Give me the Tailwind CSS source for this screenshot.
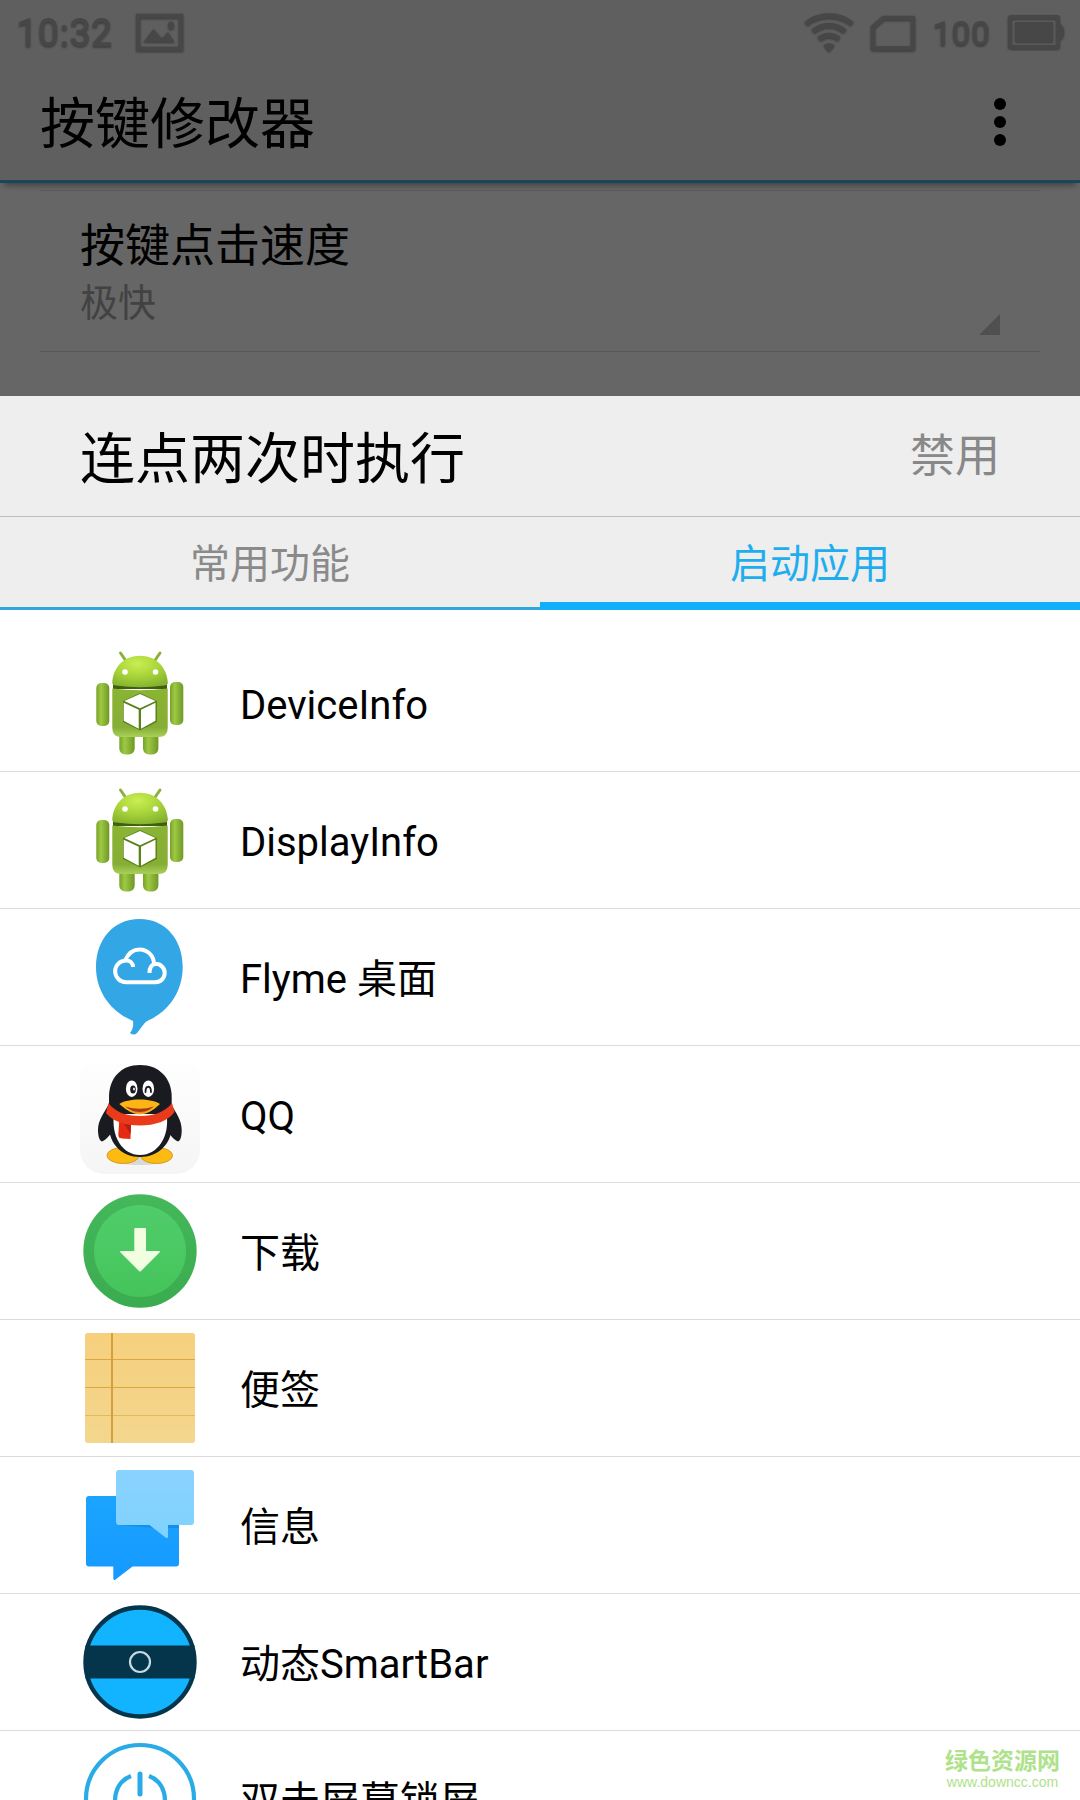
<!DOCTYPE html>
<html lang="zh-CN">
<head>
    <meta charset="UTF-8">
    <meta name="viewport" content="width=device-width, initial-scale=1.0">
    <title>按键修改器</title>
    <script src="https://cdn.jsdelivr.net/npm/@tailwindcss/browser@4"></script>
</head>
<body class="relative flex h-screen flex-col overflow-hidden bg-[#666666] font-['Roboto','Noto_Sans_CJK_SC',sans-serif] text-black">
    <!-- Status bar -->
    <div class="flex h-16 shrink-0 items-center justify-between bg-[#5f5f5f] px-4 pt-0.5 text-[#474747]">
        <div class="flex items-center gap-6 text-[38px] leading-10 font-medium text-shadow-[0_2px_2px_#00000055]">
            <span>10:32</span>
            <svg class="h-10 w-12 drop-shadow-[0_1px_1px_#00000066]" viewBox="0 0 48 40" fill="none">
                <rect x="2" y="3" width="43" height="33" stroke="currentColor" stroke-width="4.5"/>
                <path d="M7.500 29 17.500 16l8.500 9.500L32 19l6.500 10z" fill="currentColor"/>
                <ellipse cx="35" cy="12.500" rx="3" ry="4" fill="currentColor"/>
            </svg>
        </div>
        <div class="flex items-center text-[34px] leading-10 font-medium text-shadow-[0_2px_2px_#00000055]">
            <svg class="mr-4 h-11 w-[50px] drop-shadow-[0_1px_1px_#00000066]" viewBox="0 0 50 44" fill="none" stroke="currentColor" stroke-width="5">
                <path d="M2 13C14 2 36 2 48 13M9 20.500C18 12 32 12 41 20.500M15 28C21 23 29 23 35 28"/>
                <path d="M19.500 34.500C23 31.500 27 31.500 30.500 34.500L25 41z" fill="currentColor" stroke="none"/>
            </svg>
            <svg class="mr-4 h-10 w-[46px] drop-shadow-[0_1px_1px_#00000066]" viewBox="0 0 46 40" fill="none">
                <path d="M3 35.500V14L13.500 5H43v30.500z" stroke="currentColor" stroke-width="4.500" stroke-linejoin="round"/>
            </svg>
            <span class="mr-[18px]">100</span>
            <svg class="h-10 w-14 drop-shadow-[0_1px_1px_#00000066]" viewBox="0 0 56 40" fill="none">
                <rect x="2" y="4" width="48" height="30" rx="1" stroke="currentColor" stroke-width="4"/>
                <path d="M7 9h38v20H7zM52 11q4 2 4 8t-4 8z" fill="currentColor"/>
            </svg>
        </div>
    </div>

    <!-- Toolbar -->
    <header class="relative flex h-[119px] shrink-0 items-center justify-between border-b-3 border-[#18465c] bg-[#5f5f5f] pr-[68px] pl-10 shadow-[0_6px_6px_-4px_#00000066]">
        <h1 class="pt-1 text-[55px] leading-16">按键修改器</h1>
        <button type="button" aria-label="更多" class="p-1">
            <svg class="h-12 w-4" viewBox="0 0 16 48">
                <circle cx="8" cy="6" r="6"/>
                <circle cx="8" cy="24" r="6"/>
                <circle cx="8" cy="42" r="6"/>
            </svg>
        </button>
    </header>

    <!-- Preference behind the sheet -->
    <main class="shrink-0 px-10 pt-[7px] pb-11">
        <button type="button" class="flex w-full items-end justify-between border-y border-[#595959] px-10 pt-7 pb-4 text-left">
            <span class="pb-1.5">
                <span class="block text-[45px] leading-14">按键点击速度</span>
                <span class="block pt-0.5 text-[38px] leading-13 text-[#424242]">极快</span>
            </span>
            <svg class="h-[21px] w-[21px]" viewBox="0 0 21 21" fill="#505050"><path d="M21 0v21H0z"/></svg>
        </button>
    </main>

    <!-- Bottom sheet -->
    <section class="flex min-h-0 flex-1 flex-col bg-white">
        <div class="flex h-[121px] shrink-0 items-center justify-between border-b border-[#bdbdbd] bg-[#eeeeee] px-20">
            <h2 class="pt-1.5 text-[55px] leading-16">连点两次时执行</h2>
            <button type="button" class="pt-0.5 text-[45px] leading-16 text-[#888888]">禁用</button>
        </div>
        <div class="grid h-[93px] shrink-0 grid-cols-2 bg-[#eeeeee] text-[40px] leading-12" role="tablist">
            <button type="button" role="tab" aria-selected="false" class="border-b-3 border-[#2ea8dd] pt-1.5 text-[#8a8a8a]">常用功能</button>
            <button type="button" role="tab" aria-selected="true" class="border-b-8 border-[#12b0fc] pt-2.5 text-[#1fadee]">启动应用</button>
        </div>

        <ul class="min-h-0 flex-1 overflow-y-auto pt-[25px] text-[40px] leading-14 [scrollbar-width:none]">
            <li class="border-b border-[#dcdcdc]">
                <button type="button" class="flex w-full items-center gap-10 px-20 py-2 text-left">
                    <svg class="size-30" viewBox="0 0 120 120">
                        <defs>
                            <linearGradient id="limb" x1="0" x2="1" y1="0" y2="0">
                                <stop offset="0" stop-color="#78a226"/>
                                <stop offset=".35" stop-color="#9dc944"/>
                                <stop offset="1" stop-color="#6f9825"/>
                            </linearGradient>
                            <linearGradient id="torso" x1="0" x2="0" y1="0" y2="1">
                                <stop offset="0" stop-color="#8ab433"/>
                                <stop offset=".8" stop-color="#86ae36"/>
                                <stop offset="1" stop-color="#a9d058"/>
                            </linearGradient>
                            <radialGradient id="head" cx=".45" cy=".25" r=".8">
                                <stop offset="0" stop-color="#c9ee52"/>
                                <stop offset=".5" stop-color="#a8d53a"/>
                                <stop offset="1" stop-color="#83b02f"/>
                            </radialGradient>
                            <g id="android">
                                <path d="M40.500 10 46 18M80 10l-5.500 8" stroke="#8bb13c" stroke-width="3" stroke-linecap="round"/>
                                <rect x="39.300" y="86" width="15.400" height="25.500" rx="6" fill="url(#limb)"/>
                                <rect x="63" y="86" width="15.400" height="25.500" rx="6" fill="url(#limb)"/>
                                <rect x="16.300" y="40" width="13" height="43" rx="5" fill="url(#limb)"/>
                                <rect x="90" y="39" width="13.300" height="43" rx="5" fill="url(#limb)"/>
                                <path d="M33 41h54v5H33z" fill="#40600d"/>
                                <path d="M32.300 45.500Q60 49 87.700 45.500V85q0 9-9 9H41.300q-9 0-9-9z" fill="url(#torso)"/>
                                <path d="M32.300 40C33 24 44 12.700 60 12.700S87 24 87.900 40Q87.700 42 84 42.500Q60 46 36 42.500Q32.500 42 32.300 40z" fill="url(#head)"/>
                                <circle cx="45" cy="29" r="2.800" fill="#fff"/>
                                <circle cx="75.500" cy="29" r="2.800" fill="#fff"/>
                                <path d="M60 50 77 58v21L60 87.500 43 79V58z" fill="#5b821a"/>
                                <path d="M60 51 75.500 58 60 65.200 44.300 58zM43.700 59.700l15 7v19l-15-8zM61 66.700l14.500-7v18L61 85.700z" fill="#fff"/>
                            </g>
                        </defs>
                        <use href="#android"/>
                    </svg>
                    <span class="pt-1.5">DeviceInfo</span>
                </button>
            </li>
            <li class="border-b border-[#dcdcdc]">
                <button type="button" class="flex w-full items-center gap-10 px-20 py-2 text-left">
                    <svg class="size-30" viewBox="0 0 120 120"><use href="#android"/></svg>
                    <span class="pt-1.5">DisplayInfo</span>
                </button>
            </li>
            <li class="border-b border-[#dcdcdc]">
                <button type="button" class="flex w-full items-center gap-10 px-20 py-2 text-left">
                    <svg class="size-30" viewBox="0 0 120 120" fill="none">
                        <path d="M59.500 2C86 2 102.700 23 102.700 50C102.700 75 88 95 68 103.500Q65 105 63.500 107.500L57 116Q54 119 50 116Q54 111 53 104Q51 103 49 102C30 93 16 74 16 50C16 23 33 2 59.500 2z" fill="#33a6e5"/>
                        <path d="M53 50C53 46 50 43.500 46 43.500A10.800 10.800 0 0 0 46 65.200H75.500A9.200 9.200 0 0 0 75.500 46.800C71.500 47.500 69.500 51 69.500 56M45 43.500C48 37 53 32.500 59.500 32.500C67.500 32.500 74 38.500 74 47.500" stroke="#fff" stroke-width="4"/>
                    </svg>
                    <span class="pt-1.5">Flyme 桌面</span>
                </button>
            </li>
            <li class="border-b border-[#dcdcdc]">
                <button type="button" class="flex w-full items-center gap-10 px-20 py-2 text-left">
                    <svg class="size-30" viewBox="0 0 120 120">
                        <defs>
                            <linearGradient id="tile" x1="0" x2="0" y1="0" y2="1">
                                <stop offset="0" stop-color="#fff"/>
                                <stop offset="1" stop-color="#f5f5f5"/>
                            </linearGradient>
                        </defs>
                        <rect width="120" height="120" rx="24" fill="url(#tile)"/>
                        <ellipse cx="60" cy="107" rx="26" ry="4" fill="#d9d9d9"/>
                        <path d="M29 50C24 59 18 66 18 76C18 82 19.500 87 22 87.500C26 86 30 81 34 75zM91 50C96 59 101.700 66 101.700 76C101.700 82 100.500 87 98 87.500C94 86 90 81 86 75z" fill="#1a1b20"/>
                        <ellipse cx="43" cy="101.500" rx="16" ry="8" fill="#fdbb11" stroke="#d99a1c"/>
                        <ellipse cx="76.500" cy="101.500" rx="16" ry="8" fill="#fdbb11" stroke="#d99a1c"/>
                        <path d="M60 11C79 11 91.700 24 91.700 43V72C91.700 90 78 103 60 103S29 90 29 72V43C29 24 41 11 60 11z" fill="#1a1b20"/>
                        <path d="M34 60H86.500C90 82 78 101 60 101S31 82 34 60z" fill="#fff"/>
                        <path d="M39.300 65 38.300 81Q38.300 84 42 84.500L50.500 85 51 68z" fill="#e62a12"/>
                        <path d="M43.500 69 50.500 80 51 69z" fill="#b51e10"/>
                        <path d="M28.500 49C35 58 46 62 60 62S85 58 92 49L94.500 58C88 67 75 71.500 60 71.500S32 67 26 59z" fill="#ea3a1c"/>
                        <ellipse cx="51.700" cy="34.700" rx="5.800" ry="8.300" fill="#fff"/>
                        <ellipse cx="68.300" cy="34.700" rx="5.800" ry="8.300" fill="#fff"/>
                        <ellipse cx="53" cy="35.500" rx="2.800" ry="4" fill="#1a1b20"/>
                        <ellipse cx="54" cy="35" rx=".9" ry="1.600" fill="#fff"/>
                        <path d="M65.500 38C65.500 31 71 31 71 38" fill="none" stroke="#1a1b20" stroke-width="1.800" stroke-linecap="round"/>
                        <path d="M39.300 50C47 44 72 44 80 50Q69 60.500 60 60.500T39.300 50z" fill="#fdb515"/>
                        <path d="M45 52.500Q60 57 74 52.500Q66 59 60 59T45 52.500z" fill="#a9381c"/>
                        <path d="M50 56Q60 60 69 56 64 59.500 60 59.500T50 56z" fill="#f08a22"/>
                    </svg>
                    <span class="pt-1.5">QQ</span>
                </button>
            </li>
            <li class="border-b border-[#dcdcdc]">
                <button type="button" class="flex w-full items-center gap-10 px-20 py-2 text-left">
                    <svg class="size-30" viewBox="0 0 120 120">
                        <defs>
                            <linearGradient id="rim" x1="0" x2="0" y1="0" y2="1">
                                <stop offset="0" stop-color="#44b85b"/>
                                <stop offset="1" stop-color="#3bab4f"/>
                            </linearGradient>
                            <linearGradient id="disc" x1="0" x2="0" y1="0" y2="1">
                                <stop offset="0" stop-color="#50cd6b"/>
                                <stop offset="1" stop-color="#45c45b"/>
                            </linearGradient>
                        </defs>
                        <circle cx="60" cy="60" r="56.700" fill="url(#rim)"/>
                        <circle cx="60" cy="60" r="46" fill="url(#disc)"/>
                        <path d="M54.300 38q0-1 1-1h9.700q1 0 1 1V60H79q2 0 .5 1.600L61 80Q60 81 59 80L40.500 61.600Q39 60 41 60H54.300z" fill="#f1ffe0"/>
                    </svg>
                    <span class="pt-1.5">下载</span>
                </button>
            </li>
            <li class="border-b border-[#dcdcdc]">
                <button type="button" class="flex w-full items-center gap-10 px-20 py-2 text-left">
                    <svg class="size-30" viewBox="0 0 120 120">
                        <defs>
                            <linearGradient id="paper" x1="0" x2="0" y1="0" y2="1">
                                <stop offset="0" stop-color="#f6d07e"/>
                                <stop offset="1" stop-color="#f3d68d"/>
                            </linearGradient>
                        </defs>
                        <rect x="5" y="5" width="110" height="110" rx="3" fill="url(#paper)"/>
                        <path d="M5 31.500H115M5 59.500H115" stroke="#dda840"/>
                        <path d="M5 87.500H115" stroke="#e3b95c"/>
                        <path d="M32 5V115" stroke="#d3a03c" stroke-width="2"/>
                    </svg>
                    <span class="pt-1.5">便签</span>
                </button>
            </li>
            <li class="border-b border-[#dcdcdc]">
                <button type="button" class="flex w-full items-center gap-10 px-20 py-2 text-left">
                    <svg class="size-30" viewBox="0 0 120 120">
                        <defs>
                            <linearGradient id="bubble" x1="0" x2="0" y1="0" y2="1">
                                <stop offset="0" stop-color="#1ba4ff"/>
                                <stop offset="1" stop-color="#1599ff"/>
                            </linearGradient>
                            <linearGradient id="bubbleLight" x1="0" x2="0" y1="0" y2="1">
                                <stop offset="0" stop-color="#8ad2ff"/>
                                <stop offset="1" stop-color="#80d2fe"/>
                            </linearGradient>
                        </defs>
                        <path d="M9 31H96q3 0 3 3V98.500q0 3-3 3H52.500L35.500 114.500Q33.300 116 33.300 113V101.500H9q-3 0-3-3V34q0-3 3-3z" fill="url(#bubble)"/>
                        <path d="M38 60H99V63H73z" fill="#1590ea"/>
                        <path d="M39 5H111q3 0 3 3V57q0 3-3 3H88V71.500Q88 74 85.500 72.500L69.500 60H39q-3 0-3-3V8q0-3 3-3z" fill="url(#bubbleLight)"/>
                    </svg>
                    <span class="pt-1.5">信息</span>
                </button>
            </li>
            <li class="border-b border-[#dcdcdc]">
                <button type="button" class="flex w-full items-center gap-10 px-20 py-2 text-left">
                    <svg class="size-30" viewBox="0 0 120 120">
                        <circle cx="60" cy="60" r="54.500" fill="#12b4ff" stroke="#04354b" stroke-width="4.400"/>
                        <path d="M5.500 43.500H114.500V76.500H5.500z" fill="#04354b"/>
                        <circle cx="60" cy="60" r="10" fill="none" stroke="#c5dae3" stroke-width="2.200"/>
                    </svg>
                    <span class="pt-1.5">动态SmartBar</span>
                </button>
            </li>
            <li class="border-b border-[#dcdcdc]">
                <button type="button" class="flex w-full items-center gap-10 px-20 py-2 text-left">
                    <svg class="size-30" viewBox="0 0 120 120" fill="none" stroke="#29abe6">
                        <circle cx="60" cy="60" r="54" stroke-width="4.200"/>
                        <path d="M51 37A24.800 24.800 0 1 0 69 37" stroke-width="4.200"/>
                        <path d="M60 35V55" stroke-width="5" stroke-linecap="round"/>
                    </svg>
                    <span class="pt-1.5">双击屏幕锁屏</span>
                </button>
            </li>
        </ul>
    </section>

    <!-- Site mark over the corner -->
    <a href="#" class="absolute right-5 bottom-2.5 flex flex-col items-center text-[#aee28b]">
        <span class="text-[23px] leading-6 font-bold">绿色资源网</span>
        <span class="font-['Liberation_Sans',sans-serif] text-sm leading-4">www.downcc.com</span>
    </a>
</body>
</html>
